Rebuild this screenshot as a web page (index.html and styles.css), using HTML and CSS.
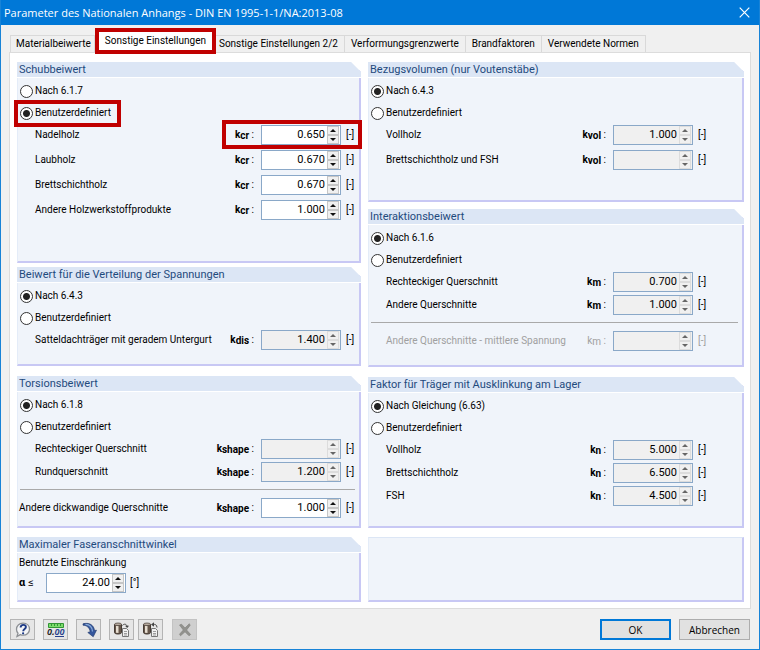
FILE: index.html
```html
<!DOCTYPE html>
<html lang="de">
  <head>
    <meta charset="UTF-8" />
    <meta name="viewport" content="width=device-width, initial-scale=1.0" />
    <title>Parameter des Nationalen Anhangs</title>
    <link rel="stylesheet" href="styles.css">
  </head>
  <body>
    <div class="dialog">
      <header class="titlebar">
        <h1>Parameter des Nationalen Anhangs - DIN EN 1995-1-1/NA:2013-08</h1>
        <button class="close" aria-label="Schließen">
          <svg width="11" height="11" viewBox="0 0 11 11"><path d="M.7.7l9.600 9.600M10.300.7L.7 10.300" stroke="#fff" stroke-width="1.200" /></svg>
        </button>
      </header>

      <div class="tabs" role="tablist">
        <button class="tab" role="tab">Materialbeiwerte</button>
        <button class="tab active" role="tab" aria-selected="true">Sonstige Einstellungen</button>
        <button class="tab" role="tab">Sonstige Einstellungen 2/2</button>
        <button class="tab" role="tab">Verformungsgrenzwerte</button>
        <button class="tab" role="tab">Brandfaktoren</button>
        <button class="tab" role="tab">Verwendete Normen</button>
      </div>

      <main class="pane">
        <div class="column left">
          <section class="group schub">
            <h2>Schubbeiwert</h2>
            <label class="choice"><input type="radio" name="schub" />Nach 6.1.7</label>
            <label class="choice marked"><input type="radio" name="schub" checked />Benutzerdefiniert</label>
            <div class="rows">
              <div class="row marked">
                <label for="kcr1">Nadelholz <span class="sym"><b>k<sub>cr</sub></b> :</span></label>
                <div class="spin"><input id="kcr1" type="text" value="0.650" /><button class="up" aria-label="Mehr"></button><button class="down" aria-label="Weniger"></button></div>
                <span>[-]</span>
              </div>
              <div class="row">
                <label for="kcr2">Laubholz <span class="sym"><b>k<sub>cr</sub></b> :</span></label>
                <div class="spin"><input id="kcr2" type="text" value="0.670" /><button class="up" aria-label="Mehr"></button><button class="down" aria-label="Weniger"></button></div>
                <span>[-]</span>
              </div>
              <div class="row">
                <label for="kcr3">Brettschichtholz <span class="sym"><b>k<sub>cr</sub></b> :</span></label>
                <div class="spin"><input id="kcr3" type="text" value="0.670" /><button class="up" aria-label="Mehr"></button><button class="down" aria-label="Weniger"></button></div>
                <span>[-]</span>
              </div>
              <div class="row">
                <label for="kcr4">Andere Holzwerkstoffprodukte <span class="sym"><b>k<sub>cr</sub></b> :</span></label>
                <div class="spin"><input id="kcr4" type="text" value="1.000" /><button class="up" aria-label="Mehr"></button><button class="down" aria-label="Weniger"></button></div>
                <span>[-]</span>
              </div>
            </div>
          </section>

          <section class="group verteilung">
            <h2>Beiwert für die Verteilung der Spannungen</h2>
            <label class="choice"><input type="radio" name="verteilung" checked />Nach 6.4.3</label>
            <label class="choice"><input type="radio" name="verteilung" />Benutzerdefiniert</label>
            <div class="rows">
              <div class="row">
                <label for="kdis">Satteldachträger mit geradem Untergurt <span class="sym"><b>k<sub>dis</sub></b> :</span></label>
                <div class="spin"><input id="kdis" type="text" value="1.400" disabled /><button class="up" aria-label="Mehr" disabled></button><button class="down" aria-label="Weniger" disabled></button></div>
                <span>[-]</span>
              </div>
            </div>
          </section>

          <section class="group torsion">
            <h2>Torsionsbeiwert</h2>
            <label class="choice"><input type="radio" name="torsion" checked />Nach 6.1.8</label>
            <label class="choice"><input type="radio" name="torsion" />Benutzerdefiniert</label>
            <div class="rows tight">
              <div class="row">
                <label for="kshape1">Rechteckiger Querschnitt <span class="sym"><b>k<sub>shape</sub></b> :</span></label>
                <div class="spin"><input id="kshape1" type="text" disabled /><button class="up" aria-label="Mehr" disabled></button><button class="down" aria-label="Weniger" disabled></button></div>
                <span>[-]</span>
              </div>
              <div class="row">
                <label for="kshape2">Rundquerschnitt <span class="sym"><b>k<sub>shape</sub></b> :</span></label>
                <div class="spin"><input id="kshape2" type="text" value="1.200" disabled /><button class="up" aria-label="Mehr" disabled></button><button class="down" aria-label="Weniger" disabled></button></div>
                <span>[-]</span>
              </div>
              <hr />
              <div class="row flush">
                <label for="kshape3">Andere dickwandige Querschnitte <span class="sym"><b>k<sub>shape</sub></b> :</span></label>
                <div class="spin"><input id="kshape3" type="text" value="1.000" /><button class="up" aria-label="Mehr"></button><button class="down" aria-label="Weniger"></button></div>
                <span>[-]</span>
              </div>
            </div>
          </section>

          <section class="group winkel">
            <h2>Maximaler Faseranschnittwinkel</h2>
            <p>Benutzte Einschränkung</p>
            <div class="angle">
              <label for="alpha"><b>α</b> ≤</label>
              <div class="spin"><input id="alpha" type="text" value="24.00" /><button class="up" aria-label="Mehr"></button><button class="down" aria-label="Weniger"></button></div>
              <span>[°]</span>
            </div>
          </section>
        </div>

        <div class="column right">
          <section class="group volumen">
            <h2>Bezugsvolumen (nur Voutenstäbe)</h2>
            <label class="choice"><input type="radio" name="volumen" checked />Nach 6.4.3</label>
            <label class="choice"><input type="radio" name="volumen" />Benutzerdefiniert</label>
            <div class="rows">
              <div class="row">
                <label for="kvol1">Vollholz <span class="sym"><b>k<sub>vol</sub></b> :</span></label>
                <div class="spin"><input id="kvol1" type="text" value="1.000" disabled /><button class="up" aria-label="Mehr" disabled></button><button class="down" aria-label="Weniger" disabled></button></div>
                <span>[-]</span>
              </div>
              <div class="row">
                <label for="kvol2">Brettschichtholz und FSH <span class="sym"><b>k<sub>vol</sub></b> :</span></label>
                <div class="spin"><input id="kvol2" type="text" disabled /><button class="up" aria-label="Mehr" disabled></button><button class="down" aria-label="Weniger" disabled></button></div>
                <span>[-]</span>
              </div>
            </div>
          </section>

          <section class="group interaktion">
            <h2>Interaktionsbeiwert</h2>
            <label class="choice"><input type="radio" name="interaktion" checked />Nach 6.1.6</label>
            <label class="choice"><input type="radio" name="interaktion" />Benutzerdefiniert</label>
            <div class="rows tight">
              <div class="row">
                <label for="km1">Rechteckiger Querschnitt <span class="sym"><b>k<sub>m</sub></b> :</span></label>
                <div class="spin"><input id="km1" type="text" value="0.700" disabled /><button class="up" aria-label="Mehr" disabled></button><button class="down" aria-label="Weniger" disabled></button></div>
                <span>[-]</span>
              </div>
              <div class="row">
                <label for="km2">Andere Querschnitte <span class="sym"><b>k<sub>m</sub></b> :</span></label>
                <div class="spin"><input id="km2" type="text" value="1.000" disabled /><button class="up" aria-label="Mehr" disabled></button><button class="down" aria-label="Weniger" disabled></button></div>
                <span>[-]</span>
              </div>
              <hr />
              <div class="row off">
                <label for="km3">Andere Querschnitte - mittlere Spannung <span class="sym">k<sub>m</sub> :</span></label>
                <div class="spin"><input id="km3" type="text" disabled /><button class="up" aria-label="Mehr" disabled></button><button class="down" aria-label="Weniger" disabled></button></div>
                <span>[-]</span>
              </div>
            </div>
          </section>

          <section class="group ausklinkung">
            <h2>Faktor für Träger mit Ausklinkung am Lager</h2>
            <label class="choice"><input type="radio" name="ausklinkung" checked />Nach Gleichung (6.63)</label>
            <label class="choice"><input type="radio" name="ausklinkung" />Benutzerdefiniert</label>
            <div class="rows tight">
              <div class="row">
                <label for="kn1">Vollholz <span class="sym"><b>k<sub>n</sub></b> :</span></label>
                <div class="spin"><input id="kn1" type="text" value="5.000" disabled /><button class="up" aria-label="Mehr" disabled></button><button class="down" aria-label="Weniger" disabled></button></div>
                <span>[-]</span>
              </div>
              <div class="row">
                <label for="kn2">Brettschichtholz <span class="sym"><b>k<sub>n</sub></b> :</span></label>
                <div class="spin"><input id="kn2" type="text" value="6.500" disabled /><button class="up" aria-label="Mehr" disabled></button><button class="down" aria-label="Weniger" disabled></button></div>
                <span>[-]</span>
              </div>
              <div class="row">
                <label for="kn3">FSH <span class="sym"><b>k<sub>n</sub></b> :</span></label>
                <div class="spin"><input id="kn3" type="text" value="4.500" disabled /><button class="up" aria-label="Mehr" disabled></button><button class="down" aria-label="Weniger" disabled></button></div>
                <span>[-]</span>
              </div>
            </div>
          </section>

          <section class="group empty"></section>
        </div>
      </main>

      <footer class="actions">
        <button class="tool" aria-label="Hilfe">
          <svg width="18" height="16" viewBox="0 0 18 16">
            <path d="M9 1.200c4 0 6.500 2.600 6.500 6s-2.700 6-6.300 6c-1 0-2-.2-2.800-.6L3 14.500l1-3.300C3 10.200 2.500 8.800 2.500 7.200c0-3.400 2.600-6 6.500-6z" fill="#f4f5f7" stroke="#8d9094" stroke-width="1.300" />
            <path d="M6.600 5.500C6.700 3.600 8 2.900 9.300 2.900c1.500 0 2.600.9 2.600 2.200 0 2-2.700 2-2.700 4.200" fill="none" stroke="#1d3a85" stroke-width="1.900" />
            <circle cx="9.100" cy="11.300" r="1.100" fill="#1d3a85" />
          </svg>
        </button>
        <button class="tool" aria-label="Einheiten und Dezimalstellen">
          <svg width="18" height="16" viewBox="0 0 18 16">
            <path d="M1.500 1.500h15v4h-15z" fill="#7cdc6c" stroke="#329536" />
            <path d="M4.500 2v2M7.500 2v2M10.500 2v2M13.500 2v2" stroke="#329536" />
            <text class="digits" x="0" y="13">0.<tspan class="decimals">00</tspan></text>
            <path d="M8 14.500h9" stroke="#27408c" />
          </svg>
        </button>
        <button class="tool" aria-label="Standard">
          <svg width="18" height="16" viewBox="0 0 18 16">
            <path d="M3 1.800C9 .2 14 3 14.500 8.500l2-.3-3.300 6.600-5.400-4.300 2.400-.8C9.600 5.800 7 3.300 3 3.200z" fill="#35579d" stroke="#1b3265" stroke-width=".6" />
            <path d="M5.500 2.300c4.500 0 6.600 2.700 7 7.200" fill="none" stroke="#8bacd9" stroke-width="1.200" />
          </svg>
        </button>
        <button class="tool" aria-label="Laden">
          <svg width="18" height="16" viewBox="0 0 18 16">
            <path d="M1.500 2.500v8c0 2 7 2 7 0v-8z" fill="#65564a" stroke="#443b34" />
            <path d="M3 3.500h2.500v7.600L3 10.700z" fill="#e6ddd0" />
            <ellipse cx="5" cy="2.300" rx="3.500" ry="1.300" fill="#b9aca0" stroke="#443b34" stroke-width=".7" />
            <path d="M9.500 6.500h4l2 2v6h-6z" fill="#f1f1f1" stroke="#777" />
            <path d="M11 9.500h3M11 11.500h3M11 13h3" stroke="#888" stroke-width=".8" />
            <path d="M9.500 3.500c1.500-2 4-1.600 4.600.8" fill="none" stroke="#444" />
            <path d="M12 3.700h4L14.200 6z" fill="#444" />
          </svg>
        </button>
        <button class="tool" aria-label="Speichern">
          <svg width="18" height="16" viewBox="0 0 18 16">
            <path d="M1.500 2.500v8c0 2 7 2 7 0v-8z" fill="#65564a" stroke="#443b34" />
            <path d="M3 3.500h2.500v7.600L3 10.700z" fill="#e6ddd0" />
            <ellipse cx="5" cy="2.300" rx="3.500" ry="1.300" fill="#b9aca0" stroke="#443b34" stroke-width=".7" />
            <path d="M9.500 6.500h4l2 2v6h-6z" fill="#f1f1f1" stroke="#777" />
            <path d="M11 9.500h3M11 11.500h3M11 13h3" stroke="#888" stroke-width=".8" />
            <path d="M11 2.500c2-.5 4 .3 4 3" fill="none" stroke="#444" />
            <path d="M12 .3v4.500L9 2.500z" fill="#444" />
          </svg>
        </button>
        <button class="tool" aria-label="Löschen" disabled>
          <svg width="18" height="16" viewBox="0 0 18 16">
            <path d="M3.500 3l2-.8L9 6l4.300-4.300.9 1.500L10.600 8l4 4.500-1.600 1.300L9 9.800l-4.500 4-1-1.600L7.300 8z" fill="#92928e" stroke="#7d7d78" stroke-width=".6" />
          </svg>
        </button>
        <button class="push default">OK</button>
        <button class="push">Abbrechen</button>
      </footer>
    </div>
  </body>
</html>
```

FILE: styles.css
```css
* {
  box-sizing: border-box;
}
body {
  margin: 0;
  background: #f0f0f0;
  color: #000;
  font: 10px/14px Roboto, "Liberation Sans", sans-serif;
}
button,
input {
  margin: 0;
  padding: 0;
  font: inherit;
  color: inherit;
}
.dialog {
  display: flex;
  flex-direction: column;
  min-height: 100vh;
  border: 1px solid #1883d7;
  border-top: none;
}

/* Title bar */
.titlebar {
  display: flex;
  justify-content: space-between;
  align-items: center;
  height: 25px;
  padding: 0 9px 0 3px;
  background: #0078d7;
  color: white;
}
.titlebar h1 {
  margin: 0;
  font: 11px/16px "Open Sans", "Noto Sans", sans-serif;
}
.close {
  display: flex;
  border: none;
  background: none;
}

/* Tabs */
.tabs {
  display: flex;
  align-items: flex-end;
  padding: 8px 9px 0;
  height: 27px;
}
.tab {
  height: 17px;
  padding: 0 6px;
  border: 1px solid #d9d9d9;
  border-left: none;
  border-bottom: none;
  background: #f0f0f0;
  white-space: nowrap;
}
.tab:first-child {
  padding-left: 5px;
  padding-right: 3px;
  border-left: 1px solid #d9d9d9;
}
.tab.active {
  position: relative;
  align-self: stretch;
  height: 26px;
  margin-top: -5px;
  border: 4px solid #c00000;
  background: white;
}
.tab.active + .tab {
  padding-left: 3px;
}

/* Pane with the two columns of groups */
.pane {
  display: flex;
  gap: 7px;
  margin: 0 8px;
  padding: 9px 6px 6px 7px;
  border: 1px solid #dcdcdc;
  background: white;
}
.column {
  display: flex;
  flex-direction: column;
  min-width: 0;
}
.left {
  flex: 344;
}
.right {
  flex: 376;
}
.group {
  border: solid #c8c8f4;
  border-width: 0 2px 2px 1px;
  border-left-color: #e4ecf8;
  background: #f0f4fa;
  clip-path: polygon(0 0, calc(100% - 10px) 0, 100% 10px, 100% 100%, 0 100%);
}
.group h2 {
  margin: 0 -2px 2px -1px;
  padding-left: 2px;
  height: 16px;
  border-bottom: 1px solid white;
  background: #dce6f5;
  color: #1f4a7d;
  font-size: 11px;
  font-weight: normal;
  line-height: 15px;
}
.schub {
  margin-bottom: 4px;
  padding-bottom: 41px;
}
.verteilung,
.interaktion {
  margin-bottom: 10px;
  padding-bottom: 14px;
}
.torsion {
  margin-bottom: 9px;
  padding-bottom: 8px;
}
.winkel {
  padding-bottom: 7px;
}
.volumen {
  margin-bottom: 7px;
  padding-bottom: 30px;
}
.ausklinkung {
  margin-bottom: 9px;
  padding-bottom: 20px;
}
.empty {
  flex: 1;
  border-top: 1px solid #dce6f5;
  clip-path: none;
}

/* Radio buttons */
.choice {
  display: flex;
  align-items: center;
  gap: 2px;
  width: max-content;
  height: 22px;
  padding-left: 2px;
}
.choice input {
  appearance: none;
  width: 13px;
  height: 13px;
  border: 1px solid #333;
  border-radius: 50%;
  background: white;
}
.choice input:checked {
  background: radial-gradient(circle, #222 3px, white 4px);
}

/* Value rows */
.rows {
  display: flex;
  flex-direction: column;
  gap: 5px;
  padding-top: 1px;
}
.rows.tight {
  gap: 3px;
}
.row {
  display: grid;
  grid-template-columns: minmax(0, 1fr) 80px 13px;
  align-items: center;
  column-gap: 5px;
  padding-left: 17px;
}
.right .row {
  padding-right: 31px;
}
.row.flush {
  padding-left: 1px;
}
.row.off {
  color: #a0a0a0;
}
.row label {
  display: flex;
  justify-content: space-between;
  white-space: nowrap;
}
.sym {
  padding-right: 2px;
}
sub {
  font-size: 10px;
  line-height: 10px;
  vertical-align: -1px;
}
.rows hr {
  width: calc(100% - 6px);
  height: 1px;
  margin: 4px 4px 5px 2px;
  border: none;
  background: #a9a9a9;
}

/* Number box with arrows */
.spin {
  display: grid;
  grid-template-columns: 1fr 12px;
  grid-template-rows: 9px 9px;
  width: 80px;
  height: 20px;
  padding-right: 1px;
  border: 1px solid #8aa8c8;
  background: white;
}
.spin input {
  grid-row: span 2;
  width: 100%;
  min-width: 0;
  padding-right: 2px;
  border: none;
  outline: none;
  background: none;
  text-align: right;
  font-size: 11px;
}
.spin button {
  display: flex;
  justify-content: center;
  align-items: center;
  border: 1px solid #c6c6c6;
  background: #f0f0f0;
}
.spin button::before {
  content: "";
  border: 3px solid transparent;
}
.spin .up::before {
  border-top: none;
  border-bottom-color: #111;
}
.spin .down::before {
  border-bottom: none;
  border-top-color: #111;
}
.spin:has(input:disabled) {
  background: #f0f0f0;
}
.spin button:disabled {
  border-color: #dcdcdc;
}
.spin .up:disabled::before {
  border-bottom-color: #666;
}
.spin .down:disabled::before {
  border-top-color: #666;
}

.winkel p {
  margin: -2px 0 0 1px;
  line-height: 20px;
}
.angle {
  display: flex;
  align-items: center;
  gap: 4px;
  padding-left: 1px;
}
.angle label {
  width: 23px;
  font-size: 11px;
}

/* Red frames */
.marked {
  position: relative;
}
.marked::after {
  content: "";
  position: absolute;
  border: 4px solid #c00000;
  pointer-events: none;
}
.choice.marked::after {
  inset: -2px -10px -3px -4px;
}
.row.marked::after {
  inset: -5px -3px -4px 204px;
}
/* the frame reaches past the group's edge */
.schub {
  clip-path: polygon(-4px 0, calc(100% - 10px) 0, 100% 10px, calc(100% + 4px) 10px, calc(100% + 4px) 100%, -4px 100%);
}

/* Bottom bar */
.actions {
  display: flex;
  align-items: center;
  padding: 10px 9px 9px;
}
.tool {
  display: flex;
  justify-content: center;
  align-items: center;
  width: 25px;
  height: 21px;
  margin-right: 8px;
  border: 1px solid #b4b4b4;
  background: #e6e6e6;
}
.tool:nth-child(4) {
  margin-right: 4px;
}
.tool:nth-child(5) {
  margin-right: 9px;
}
.tool:disabled {
  background: #cfcfcf;
  border-color: #c3c3c3;
}
.digits {
  font: italic bold 9px "Liberation Sans", sans-serif;
  fill: #222;
}
.decimals {
  fill: #27408c;
}
.push {
  width: 71px;
  height: 21px;
  border: 1px solid #adadad;
  background: #e1e1e1;
  font: 10px/14px "Open Sans", "Noto Sans", sans-serif;
}
.push.default {
  margin-left: auto;
  margin-right: 8px;
  border: 2px solid #0078d7;
}
```
